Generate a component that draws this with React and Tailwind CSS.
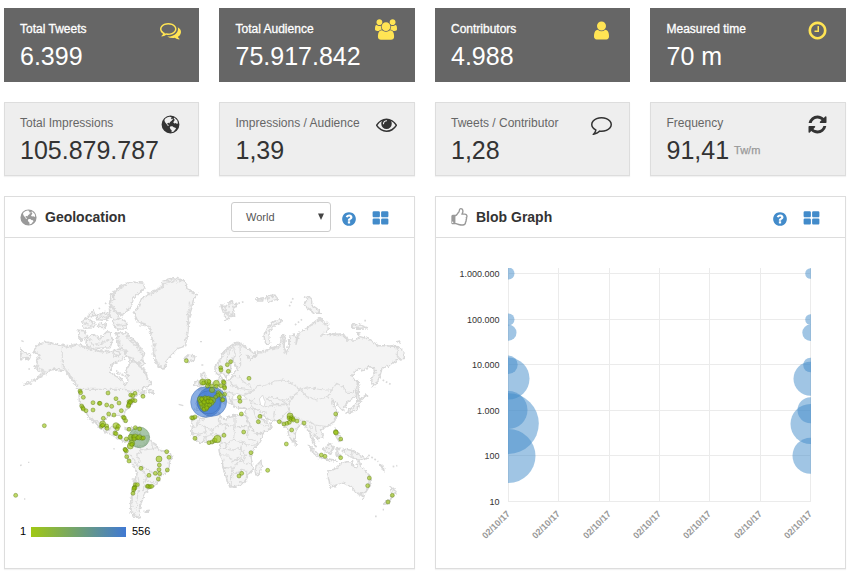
import React from 'react';

const ICONS = {
  comments: ['0 0 1792 1792', 'M704 384q-153 0-286 52t-211.5 141-78.5 191q0 82 53 158t149 132l97 56-35 84q34-20 62-39l44-31 53 10q78 14 153 14 153 0 286-52t211.5-141 78.5-191-78.5-191-211.5-141-286-52zm0-128q191 0 353.5 68.5t256.5 186.5 94 257-94 257-256.5 186.5-353.5 68.5q-86 0-176-16-124 88-278 128-36 9-86 16h-3q-11 0-20.5-8t-11.5-21q-1-3-1-6.5t.5-6.5 2-6l2.5-5 3.5-5.5 4-5 4.5-5 4-4.5q5-6 23-25t26-29.5 22.5-29 25-38.5 20.5-44q-124-72-195-177t-71-224q0-139 94-257t256.5-186.5 353.5-68.5zm822 1169q10 24 20.5 44t25 38.5 22.5 29 26 29.5 23 25q1 1 4 4.5t4.5 5 4 5 3.5 5.5l2.5 5 2 6 .5 6.5-1 6.5q-3 14-13 22t-22 7q-50-7-86-16-154-40-278-128-90 16-176 16-271 0-472-132 58 4 88 4 161 0 309-45t264-129q125-92 192-212t67-254q0-77-23-152 129 71 204 178t75 230q0 120-71 224.5t-195 176.5z'],
  users: ['-64 0 1920 1792', 'M529 896q-162 5-265 128h-134q-82 0-138-40.5t-56-118.5q0-353 124-353 6 0 43.5 21t97.5 42.5 119 21.5q67 0 133-23-5 37-5 66 0 139 81 256zm1071 637q0 120-73 189.5t-194 69.5h-874q-121 0-194-69.5t-73-189.5q0-53 3.5-103.5t14-109 26.5-108.5 43-97.5 62-81 85.5-53.5 111.5-20q10 0 43 21.5t73 48 107 48 135 21.5 135-21.5 107-48 73-48 43-21.5q61 0 111.5 20t85.5 53.5 62 81 43 97.5 26.5 108.5 14 109 3.5 103.5zm-1024-1277q0 106-75 181t-181 75-181-75-75-181 75-181 181-75 181 75 75 181zm704 384q0 159-112.5 271.5t-271.5 112.5-271.5-112.5-112.5-271.5 112.5-271.5 271.5-112.5 271.5 112.5 112.5 271.5zm576 225q0 78-56 118.5t-138 40.5h-134q-103-123-265-128 81-117 81-256 0-29-5-66 66 23 133 23 59 0 119-21.5t97.5-42.5 43.5-21q124 0 124 353zm-128-609q0 106-75 181t-181 75-181-75-75-181 75-181 181-75 181 75 75 181z'],
  user: ['0 0 1792 1792', 'M1536 1399q0 109-62.5 187t-150.5 78h-854q-88 0-150.5-78t-62.5-187q0-85 8.5-160.5t31.5-152 58.5-131 94-89 134.5-34.5q131 128 313 128t313-128q76 0 134.5 34.5t94 89 58.5 131 31.5 152 8.5 160.5zm-256-887q0 159-112.5 271.5t-271.5 112.5-271.5-112.5-112.5-271.5 112.5-271.5 271.5-112.5 271.5 112.5 112.5 271.5z'],
  clock: ['0 0 1792 1792', 'M1024 544v448q0 14-9 23t-23 9h-320q-14 0-23-9t-9-23v-64q0-14 9-23t23-9h224v-352q0-14 9-23t23-9h64q14 0 23 9t9 23zm416 352q0-148-73-273t-198-198-273-73-273 73-198 198-73 273 73 273 198 198 273 73 273-73 198-198 73-273zm224 0q0 209-103 385.5t-279.5 279.5-385.5 103-385.5-103-279.5-279.5-103-385.5 103-385.5 279.5-279.5 385.5-103 385.5 103 279.5 279.5 103 385.5z'],
  eye: ['0 0 1792 1792', 'M1664 960q-152-236-381-353 61 104 61 225 0 185-131.5 316.5t-316.5 131.5-316.5-131.5-131.5-316.5q0-121 61-225-229 117-381 353 133 205 333.5 326.5t434.5 121.5 434.5-121.5 333.5-326.5zm-720-384q0-20-14-34t-34-14q-125 0-214.5 89.5t-89.5 214.5q0 20 14 34t34 14 34-14 14-34q0-86 61-147t147-61q20 0 34-14t14-34zm848 384q0 34-20 69-140 230-376.5 368.5t-499.5 138.5-499.5-139-376.5-368q-20-35-20-69t20-69q140-229 376.5-368t499.5-139 499.5 139 376.5 368q20 35 20 69z'],
  comment: ['0 0 1792 1792', 'M896 384q-204 0-381.5 69.5t-282 187.5-104.5 255q0 112 71.5 213.5t201.5 175.5l87 50-27 96q-24 91-70 172 152-63 275-171l43-38 57 6q69 8 130 8 204 0 381.5-69.5t282-187.5 104.5-255-104.5-255-282-187.5-381.5-69.5zm896 512q0 174-120 321.5t-326 233-450 85.5q-70 0-145-8-198 175-460 242-49 14-114 22h-5q-15 0-27-10.5t-16-27.5v-1q-3-4-.5-12t2-10 4.5-9.5l6-9 7-8.5 8-9q7-8 31-34.5t34.5-38 31-39.5 32.5-51 27-59 26-76q-157-89-247.5-220t-90.5-281q0-174 120-321.5t326-233 450-85.5 450 85.5 326 233 120 321.5z'],
  refresh: ['0 0 1792 1792', 'M1639 1056q0 5-1 7-64 268-268 434.5t-478 166.5q-146 0-282.5-55t-243.5-157l-129 129q-19 19-45 19t-45-19-19-45v-448q0-26 19-45t45-19h448q26 0 45 19t19 45-19 45l-137 137q71 66 161 102t187 36q134 0 250-65t186-179q11-17 53-117 8-23 30-23h192q13 0 22.5 9.5t9.5 22.5zm25-800v448q0 26-19 45t-45 19h-448q-26 0-45-19t-19-45 19-45l138-138q-148-137-349-137-134 0-250 65t-186 179q-11 17-53 117-8 23-30 23h-199q-13 0-22.5-9.5t-9.5-22.5v-7q65-268 270-434.5t480-166.5q146 0 284 55.5t245 156.5l130-129q19-19 45-19t45 19 19 45z'],
  question: ['0 0 1792 1792', 'M1024 1376v-192q0-14-9-23t-23-9h-192q-14 0-23 9t-9 23v192q0 14 9 23t23 9h192q14 0 23-9t9-23zm256-672q0-88-55.5-163t-138.5-116-170-41q-243 0-371 213-15 24 8 42l132 100q7 6 19 6 16 0 25-12 53-68 86-92 34-24 86-24 48 0 85.5 26t37.5 59q0 38-20 61t-68 45q-63 28-115.5 86.5t-52.5 125.5v36q0 14 9 23t23 9h192q14 0 23-9t9-23q0-19 21.5-49.5t54.5-49.5q32-18 49-28.5t46-35 44.5-48 28-60.5 12.5-81zm384 192q0 209-103 385.5t-279.5 279.5-385.5 103-385.5-103-279.5-279.5-103-385.5 103-385.5 279.5-279.5 385.5-103 385.5 103 279.5 279.5 103 385.5z'],
  grid: ['0 0 1792 1792', 'M832 1024v384q0 52-38 90t-90 38h-512q-52 0-90-38t-38-90v-384q0-52 38-90t90-38h512q52 0 90 38t38 90zm0-768v384q0 52-38 90t-90 38h-512q-52 0-90-38t-38-90v-384q0-52 38-90t90-38h512q52 0 90 38t38 90zm896 768v384q0 52-38 90t-90 38h-512q-52 0-90-38t-38-90v-384q0-52 38-90t90-38h512q52 0 90 38t38 90zm0-768v384q0 52-38 90t-90 38h-512q-52 0-90-38t-38-90v-384q0-52 38-90t90-38h512q52 0 90 38t38 90z'],
  thumb: ['0 0 1792 1792', 'M320 1344q0-26-19-45t-45-19q-27 0-45.5 19t-18.5 45q0 27 18.5 45.5t45.5 18.5q26 0 45-18.5t19-45.5zm1216-576q0-51-39-89.5t-89-38.5h-352q0-58 48-159.5t48-160.5q0-98-32-145t-128-47q-26 26-38 85t-30.5 125.5-59.5 109.5q-22 23-77 91-4 5-23 30t-31.5 41-34.5 42.5-40 44-38.5 35.5-40 27-35.5 9h-32v640h32q13 0 31.5 3t33 6.5 38 11 35 11.5 35.5 12.5 29 10.5q211 73 342 73h121q192 0 192-167 0-26-5-56 30-16 47.5-52.5t17.5-73.5-18-69q53-50 53-119 0-25-10-55.5t-25-47.5q32-1 53.5-47t21.5-81zm128-1q0 89-49 163 9 33 9 69 0 77-38 144 3 21 3 43 0 101-60 178 1 139-85 219.5t-227 80.5h-129q-96 0-189.5-22.5t-216.5-65.5q-116-40-138-40h-288q-53 0-90.5-37.5t-37.5-90.5v-640q0-53 37.5-90.5t90.5-37.5h274q36-24 137-155 58-75 107-128 24-25 35.5-85.5t30.5-126.5 62-108q39-37 90-37 84 0 151 32.5t102 101.5 35 186q0 93-48 192h176q104 0 180 76t76 179z'],
  globe: ['-1.5 -1.5 20 20', 'M8.5 0A8.5 8.5 0 1 1 8.5 17A8.5 8.5 0 1 1 8.5 0ZM5.6 1.7L3.6 2.9 2.7 4.3 3 5.6 3.7 6.8 4.9 8.2 5.8 9.7 6.8 10 6.5 8.8 5.4 8.3 5.5 7.2 6.7 6.9 7.5 7.5 7.9 6.3 9 5.3 10 4.8 9.5 3.9 10.9 4.1 10.2 2.7 9.3 3.2 8.8 2.3 9.9 1.6 7.6 1.2ZM12.1 1.8L11.5 3 12.6 4 11.8 5.5 11.1 6.4 12.1 7.5 13.7 7.1 14.6 8 15.6 7.2 15 4.8ZM8.6 10.2L7.8 11.3 8.5 13.1 9.6 14 9.5 15.8 11.6 15.2 12.8 13.6 13.8 12.5 13.2 11.5 11.6 11.2 10.4 10.2Z'],
};

function Icon({ name, className }) {
  const [viewBox, d] = ICONS[name];
  return (
    <svg viewBox={viewBox} className={`shrink-0 ${className}`} fill="currentColor" fillRule="evenodd">
      <path d={d} />
    </svg>
  );
}

const STATS = [
  ['Total Tweets', '6.399', 'comments'],
  ['Total Audience', '75.917.842', 'users'],
  ['Contributors', '4.988', 'user'],
  ['Measured time', '70 m', 'clock'],
  ['Total Impressions', '105.879.787', 'globe'],
  ['Impressions / Audience', '1,39', 'eye'],
  ['Tweets / Contributor', '1,28', 'comment'],
  ['Frequency', '91,41', 'refresh', 'Tw/m'],
];

function StatCard({ stat, dark, wide }) {
  const [label, value, icon, unit] = stat;
  const size = icon === 'users' ? 'h-[21px] w-[22px] mt-0' : 'h-[21px] w-[21px] mt-[0.5px]';
  return (
    <div className={`flex h-[74px] justify-between border pt-[10px] ${wide ? 'pl-[15.5px] pr-[17.5px]' : 'pl-[15px] pr-[17px]'} ${dark ? 'border-[#666] bg-[#666] text-white' : 'border-[#ddd] bg-[#eee] text-[#333] shadow-[0_1px_1px_rgba(0,0,0,0.05)]'}`}>
      <div className="whitespace-nowrap">
        <div className={`text-[12px] leading-5 ${dark ? '[-webkit-text-stroke:0.3px_white]' : 'text-[#666]'}`}>{label}</div>
        <div className="-mt-px flex items-center text-[25px] leading-[36px]">
          {value}
          {unit && <span className="ml-[5px] text-[11px] text-[#999] [-webkit-text-stroke:0.25px_#999]">{unit}</span>}
        </div>
      </div>
      <Icon name={icon} className={`${size} ${dark ? 'text-[#ffe454]' : 'text-[#333]'}`} />
    </div>
  );
}

function PanelTools() {
  return (
    <div className="mt-[3px] flex items-center text-[#428bca]">
      <Icon name="question" className="h-4 w-4" />
      <Icon name="grid" className="ml-[15px] h-[17px] w-[17px]" />
    </div>
  );
}

function Panel({ icon, title, children, extra }) {
  return (
    <section className="h-[373px] border border-[#ddd] bg-white shadow-[0_1px_1px_rgba(0,0,0,0.05)]">
      <header className="flex h-[41px] items-center border-b border-[#ddd] pl-[14px] pr-[25px]">
        <Icon name={icon} className="h-[19px] w-[19px] text-[#999]" />
        <h2 className="ml-[7px] flex-1 text-[14px] font-bold text-[#333]">{title}</h2>
        {extra}
        <PanelTools />
      </header>
      {children}
    </section>
  );
}

/* Land outlines, one list for each sheet of the map. */
const WEST_LAND = [
  'M75 248L85 238 105 230 130 236 157 241 178 247 205 238 225 245 240 250 262 258 285 262 300 258 312 262 325 252 345 262 352 272 333 285 313 293 302 305 301 322 315 332 335 343 345 362 353 350 355 330 345 322 358 300 356 290 372 285 385 300 397 310 408 325 412 340 424 355 410 366 395 372 403 378 395 390 385 388 372 400 360 425 345 438 342 452 350 468 343 472 336 455 325 448 312 452 298 455 285 462 278 475 283 490 297 496 303 486 316 483 315 500 322 508 334 514 337 526 356 524 352 530 340 532 325 520 310 512 290 502 270 490 258 475 244 458 250 475 240 462 228 442 214 428 208 410 207 378 198 362 188 345 178 330 165 318 150 315 135 312 120 316 108 328 92 335 75 345 98 322 85 318 75 305 82 295 78 285 92 278 88 268 72 262Z',
  'M395 100L425 85 460 65 455 50 490 38 515 45 530 55 530 70 545 80 562 88 550 105 545 130 535 160 535 190 530 225 525 243 505 250 480 275 468 290 462 312 450 310 437 290 430 265 430 235 420 195 410 178 385 172 372 145 385 125Z',
  'M305 90L330 65 365 50 400 55 405 70 385 85 370 100 365 120 350 140 335 150 310 135 298 115Z',
  'M318 205L345 203 365 218 385 240 405 268 395 285 403 295 390 305 378 295 370 280 350 275 345 255 325 245Z',
  'M230 218L250 207 270 222 290 200 300 202 308 225 300 248 270 250 240 250 228 235Z',
  'M205 195L225 198 232 215 215 228 207 215Z',
  'M215 172L230 158 240 168 255 175 250 188 222 190Z',
  'M232 152L250 137 255 150 240 158Z', 'M262 150L285 142 300 155 285 166 262 164Z', 'M268 175L290 178 285 188 262 186Z',
  'M312 158L335 160 350 172 348 192 320 192 310 178Z', 'M298 125L315 135 330 160 320 165 300 155Z', 'M302 92L310 90 312 102 302 108Z',
  'M313 255L330 262 325 275 312 272Z', 'M524 278L535 270 555 273 553 285 535 293Z', 'M32 252L45 262 62 270 58 282 40 278 33 285Z',
  'M393 382L405 380 400 390Z', 'M412 372L430 378 430 385 415 382Z', 'M345 490L360 488 372 494 360 495Z',
  'M358 540L360 520 375 500 392 510 415 515 425 530 440 540 445 555 470 560 488 572 478 592 478 610 465 625 450 635 445 650 432 662 412 675 402 690 395 710 388 735 390 755 375 758 362 740 362 710 368 680 375 650 380 620 370 600 355 585 345 565 345 553Z',
  'M405 738L418 736 412 742Z',
];
const WEST_BORDERS = 'M157 241V312M157 300L178 328M208 373H345L357 382 375 375 390 378M236 461L260 470 278 473M284 495L292 502M360 540L385 545 400 555 425 552 440 548M345 568L365 572 380 600 400 608 425 620 440 632M378 602L390 590 380 570 395 560 385 545 410 535 412 518M383 625L388 660 382 700 378 740M400 640L420 650 432 655M398 615L410 640 402 655 400 680M425 530L428 552';
const WEST_RUGGED = 'M162 245L200 238 232 250 262 257 300 258M170 322L185 338 202 366M88 268L78 285 82 305 108 322 62 352 40 360M372 640L368 680 363 715 366 740 384 756M386 290L410 325M436 235L432 265 440 292 458 312M540 110L536 150 532 200 526 240M410 85L440 75 470 50 525 48M300 92L320 75 350 55M302 118L315 138 340 152M232 215L250 240 275 235 300 222M350 210L385 250 402 278M350 275L375 290 395 308M322 210L330 240 350 262M222 175L245 182M268 155L298 158M320 180H350M318 320L350 335M388 178L410 180 424 205';

const EAST_LAND = [
  'M45 305L60 285 68 268 80 250 98 238 112 232 126 240 140 248 158 262 168 270 152 275 138 268 150 284 168 272 185 258 200 255 215 248 228 245 240 240 245 215 250 206 256 220 252 240 258 268 266 240 270 215 280 207 290 218 288 238 294 215 298 202 320 190 335 178 358 160 382 175 385 195 365 210 400 208 430 207 440 225 465 225 480 215 505 222 535 242 560 242 595 245 613 262 613 280 600 282 585 290 572 300 546 310 540 332 530 355 518 365 515 345 528 315 508 305 490 318 478 310 455 330 460 342 475 350 472 375 465 395 450 405 440 412 436 425 430 438 422 430 412 418 396 402 402 425 412 440 410 455 395 478 370 490 360 496 370 508 368 518 356 524 344 508 338 520 348 545 340 538 332 518 330 500 320 490 312 475 300 480 288 495 283 520 278 530 268 515 262 490 250 480 240 468 215 466 200 462 190 450 180 452 195 470 215 476 210 492 185 505 168 510 160 500 145 472 136 452 140 430 120 430 100 425 96 408 88 418 80 410 70 395 62 390 76 410 72 418 58 402 45 395 30 410 22 432 5 440 -12 435 -10 405 15 402 18 385 8 378 25 370 40 355 52 350 60 333 66 345 90 345 98 335 100 322 115 315 108 303 98 285 106 268 92 290 92 318 78 337 68 322 55 330 45 320Z',
  'M-2 372L8 345 2 330 12 322 20 345 28 365 10 372Z', 'M-15 350L0 348 -2 362 -16 364Z',
  'M195 230L192 212 205 185 222 170 245 163 242 172 222 180 208 200 206 220 212 233 200 238Z',
  'M62 120L85 122 92 108 112 120 100 130 104 155 95 150 80 165 70 142Z',
  'M170 102L190 98 188 108 172 108Z', 'M200 92L225 90 232 103 205 112Z', 'M312 120L325 95 335 105 335 120 350 130 362 145 340 145 328 132Z',
  'M455 180L475 178 502 188 480 190 458 190Z', 'M470 202L480 206 472 210Z', 'M590 230L600 228 602 234Z',
  'M473 345L478 365 474 385 480 405 470 408 470 375Z', 'M470 412L490 395 500 390 488 405 475 418 470 435 450 442 438 445 445 435 462 425Z',
  'M408 492L416 505 410 512 422 515 428 528 414 525 405 508Z', 'M328 540L345 558 362 575 355 578 338 562Z', 'M362 578L400 584 412 588 380 586Z',
  'M370 552L392 536 402 548 392 568 376 562Z', 'M408 552L420 550 412 560 420 575 408 570Z', 'M430 552L455 556 480 572 505 580 482 586 450 575 430 562Z',
  'M383 628L385 618 410 610 425 595 440 590 458 590 455 600 470 608 475 585 485 605 500 620 512 640 508 665 495 685 480 690 465 680 455 665 430 655 410 660 390 667 388 650Z',
  'M482 683L495 683 490 700Z', 'M570 665L588 680 575 696 574 680Z', 'M552 718L575 698 565 716Z', 'M540 598L550 606 552 618Z',
  'M284 525L290 532 286 540Z', 'M409 448L412 455 408 460Z',
];
const EAST_BORDERS = 'M158 380L170 362 200 360 225 348 250 345 270 352 300 372 290 385 262 405 240 405 215 395 195 400M300 372L330 368 370 375 395 375 385 395 350 405 320 395 300 372M395 375L410 355 430 365 440 385 455 385 470 370M290 385L262 420 270 445 300 465 330 470 345 480 380 485M592 245V272L600 282M120 240L122 300 105 322M106 268L100 245 85 262 78 300M100 335H118L130 350 150 362 155 380 130 392M90 345L98 365 120 370 150 375M58 355L62 375 80 380 100 385 108 392M40 365L55 375 58 395M78 350L75 375M80 380L90 405M140 432L160 430 185 440 200 445M150 412L160 430 165 450 185 480 210 485M195 425L230 418 262 420M225 430L220 460M240 465L262 440 270 445M200 400L225 420 262 415M308 470L312 480M330 470L335 500M345 480L350 505M350 530L345 540M370 552L390 550M455 556L456 576M165 400L150 405 160 415 182 418M110 360L90 362M62 375L45 385M100 388L98 402 88 405M245 405L260 418';
const EAST_RUGGED = 'M52 300L66 276 84 252 112 236 134 244M160 262L185 262 215 252 240 246M246 215L256 264M292 212L300 206M328 182L360 162 378 180M400 210H430L444 225M85 112L100 120M72 124L82 150 92 146';

const CENTRE_LAND = [
  'M50 243L62 232 85 236 100 224 133 220 137 232 155 238 165 228 195 224 212 226 216 238 222 255 234 272 240 282 262 280 264 288 250 312 235 330 228 345 230 362 235 385 222 402 215 415 205 430 190 438 165 442 158 425 150 400 143 380 143 360 135 345 132 330 135 312 128 305 120 308 102 306 90 305 75 308 62 298 50 280 52 262Z',
  'M243 378L258 363 260 380 252 402 243 405 240 392Z',
];
const CENTRE_BORDERS = 'M52 262L65 260 66 244 85 240M66 248L88 262 95 278 72 282 52 280M133 222L130 240 140 250 155 255 180 260V226M180 260H222M88 262L112 270 140 250M112 270L108 285 90 290 85 305M108 285L128 284 140 288 155 255M128 284L126 304M140 288L138 308 155 312 175 300 180 260M155 312L150 325H135M175 300L200 305 215 315 240 312 250 310M200 305L198 325 210 345 228 348M222 255L215 290 230 300 245 302M150 325L168 330 198 325M140 345H160L172 365 190 355 200 365 195 335M143 382L175 385 185 370 200 365 215 372 230 368M175 385L170 405 168 440M170 405L185 400 200 388 215 392 215 415M60 298L72 282M95 305L92 292M192 432L196 424 203 428M205 365L212 345';

const WEST_DOTS = [[210,378],[212,383],[294,384],[362,390],[375,385],[318,401],[399,394],[220,397],[249,413],[268,415],[270,415],[290,420],[305,424],[327,414],[215,423],[218,428],[220,432],[228,437],[249,435],[334,437],[296,447],[312,450],[340,457],[343,459],[347,467],[357,410],[362,408],[368,406],[375,407],[358,415],[361,412],[355,424],[356,420],[368,392],[280,460],[274,484],[278,477,9],[290,483],[278,481],[291,490],[318,482,9],[322,491],[325,484],[315,504],[318,506],[330,515],[331,517],[357,493],[376,488],[389,492],[103,482],[17,691],[349,522],[363,517,9],[370,516],[376,516,9],[383,518],[388,517,8],[396,520],[400,519],[372,522],[365,535,9],[361,543,9],[366,538],[345,553],[349,558],[346,555],[350,575],[357,588],[470,560],[477,577],[447,582,9],[448,600],[447,614],[449,626],[436,625],[472,615],[393,610],[417,631],[445,642],[376,659],[382,659],[373,667],[375,669],[371,675],[369,685],[372,670],[412,664],[415,664],[420,665],[425,664],[529,287]];
const CENTRE_DOTS = [[137,83],[138,90],[157,74],[167,65],[160,94],[222,115],[193,172],[195,184],[199,222],[255,229],[250,245],[206,276],[60,295],[102,308],[111,306],[119,301,7],[127,297,11],[147,286],[228,338],[192,408],[200,400],[278,391],[334,312],[350,270],[313,245],[327,252],[336,250],[343,247],[345,228,9],[342,234],[349,233],[348,238],[354,236],[355,240],[366,243],[50,233],[54,234],[60,231],[145,125],[147,128],[148,140],[149,144],[124,130,9],[124,139],[110,138],[83,126,9],[86,129],[98,126,9],[100,132],[97,138],[102,125],[138,137],[130,158],[134,162],[138,167],[142,180],[128,166],[149,163],[111,150,8],[144,179],[122,171]];
const SPAIN_DOTS = [[76,178,9],[80,185,10],[84,178,8],[90,173],[96,178,9],[101,174],[104,182,9],[108,177],[113,181,9],[109,188,8],[96,189,9],[89,194,10],[84,200,9],[91,205,9],[97,198,8],[104,195],[78,192],[80,177],[99,184],[87,208],[95,204],[107,184],[87,186]];
const EAST_DOTS = [[312,474],[407,447],[407,501,7],[408,503,7],[422,522],[364,570],[375,574],[422,578],[508,639],[503,662],[577,691],[564,711]];

function Dots({ items }) {
  return items.map(([x, y, r = 6], i) => (
    <circle key={i} cx={x} cy={y} r={r} fill="#98c20c" fillOpacity=".62" stroke="#5a7810" strokeOpacity=".48" strokeWidth="2.6" />
  ));
}

function Land({ shapes, borders, rugged }) {
  return (
    <g filter="url(#coast)" stroke="#d9d9d9" strokeWidth="4.4" strokeLinejoin="round">
      {shapes.map((d, i) => <path key={i} d={d} fill="#f4f4f4" />)}
      <path d={borders} fill="none" strokeWidth="3.6" stroke="#dcdcdc" />
      {rugged && <path d={rugged} fill="none" stroke="#dcdcdc" strokeWidth="7" strokeDasharray="9 2 4 3" />}
    </g>
  );
}

const WEST = 'translate(5 27) scale(.33333)';
const EAST = 'translate(195 27) scale(.33333)';
const CENTRE = 'translate(170 102) scale(.33333)';

function WorldMap() {
  return (
    <svg viewBox="0 0 409 330" className="block h-[330px] w-[409px]" fontFamily="Liberation Sans, Arial, sans-serif">
      <defs>
        <filter id="coast" x="-5%" y="-5%" width="110%" height="110%" colorInterpolationFilters="sRGB">
          <feTurbulence type="fractalNoise" baseFrequency=".11" numOctaves="3" seed="4" />
          <feDisplacementMap in="SourceGraphic" scale="13" xChannelSelector="R" yChannelSelector="G" />
        </filter>
        <linearGradient id="scale"><stop stopColor="#a0c814" /><stop offset="1" stopColor="#4079d3" /></linearGradient>
        <clipPath id="mapArea"><rect x="15" y="30" width="385" height="260" /></clipPath>
      </defs>
      <g clipPath="url(#mapArea)">
        <g transform={EAST}><Land shapes={EAST_LAND} borders={EAST_BORDERS} rugged={EAST_RUGGED} />
          <g fill="#fff" stroke="#ddd" strokeWidth="3"><path d="M98 394L110 385 130 392 142 402 120 403 98 405Z" /><path d="M178 402L188 390 192 402 196 410 192 426 182 420Z" /></g>
          <g fill="none" stroke="#d9d9d9" strokeWidth="5" strokeDasharray="5 6"><path d="M172 105L230 95M63 125H110M75 135L103 150M115 115L132 110M268 124L280 98M285 180L310 160M505 570L535 590M548 345L572 358M578 605L592 602M70 262L95 240 120 236M312 95L318 98M493 167H500M88 195H92M525 754H530M548 734H552" /></g>
        </g>
        <g transform={CENTRE}><Land shapes={CENTRE_LAND} borders={CENTRE_BORDERS} /></g>
        <g transform={WEST}><Land shapes={WEST_LAND} borders={WEST_BORDERS} rugged={WEST_RUGGED} />
          <path d="M34 227L41 230M55 312H60M28 602L35 600M54 592H58M310 551L314 552M506 418L520 422M42 702H46M570 230H576M574 300H580M285 113L289 117M266 128L270 132" stroke="#d9d9d9" strokeWidth="4" />
        </g>
      </g>
      <g transform={CENTRE} fill="#3c78d2" stroke="#3b68ad" strokeOpacity=".65" strokeWidth="2">
        <circle cx="93" cy="186" r="46" fillOpacity=".6" /><circle cx="111" cy="185" r="44" fillOpacity=".6" /><circle cx="101" cy="187" r="35" fillOpacity=".3" />
      </g>
      <g transform={WEST}>
        <circle cx="388" cy="517" r="31" fill="#6ea06f" fillOpacity=".6" stroke="#58865a" strokeOpacity=".6" strokeWidth="2" />
        <Dots items={WEST_DOTS} />
      </g>
      <g transform={CENTRE}><Dots items={CENTRE_DOTS} /><Dots items={SPAIN_DOTS} /></g>
      <g transform={EAST}><Dots items={EAST_DOTS} /></g>
      <rect x="26" y="289" width="95" height="10" fill="url(#scale)" />
      <text x="15" y="297" fontSize="11">1</text>
      <text x="127" y="297" fontSize="11">556</text>
    </svg>
  );
}

const BLOBS = [
  [508.5, 273.5, 6], [508.5, 319.5, 6], [508.5, 332.7, 8], [508.5, 364.7, 9.2], [508.5, 378.6, 21], [508.5, 410, 19], [508.5, 423.6, 30.3], [508.5, 456, 27],
  [810.5, 273.5, 5.3], [810.5, 319.5, 5.3], [810.5, 332.8, 8.2], [810.5, 365, 7.3], [810.5, 378.7, 17], [810.5, 410.2, 13], [810.5, 424, 20], [810.5, 455.8, 18],
];
const X_TICKS = [508.5, 558.5, 609.5, 659.5, 709.5, 760.5, 810.5];
const Y_TICKS = [[273.5, '1.000.000'], [319.5, '100.000'], [364.5, '10.000'], [410.5, '1.000'], [455.5, '100'], [501.5, '10']];

function BlobGraph() {
  return (
    <svg viewBox="436 238 409 330" className="block h-[330px] w-[409px]" fontFamily="Liberation Sans, Arial, sans-serif" fontSize="9">
      <clipPath id="plot"><rect x="508" y="268" width="303" height="234" /></clipPath>
      <g stroke="#ebebeb">
        {X_TICKS.map((x) => <path key={x} d={`M${x} 268V502`} />)}
        {Y_TICKS.map(([y]) => <path key={y} d={`M508 ${y}H811`} />)}
      </g>
      <g clipPath="url(#plot)" fill="#428bca" fillOpacity=".5">
        {BLOBS.map(([x, y, r], i) => <circle key={i} cx={x} cy={y} r={r} />)}
      </g>
      <g textAnchor="end" fill="#333">
        {Y_TICKS.map(([y, label]) => <text key={label} x="499.5" y={y + 3.5}>{label}</text>)}
      </g>
      <g textAnchor="end" fill="#999" fontWeight="bold">
        {X_TICKS.map((x) => <text key={x} transform={`translate(${x + 2} 514.5) rotate(-45)`}>02/10/17</text>)}
      </g>
    </svg>
  );
}

function RegionSelect() {
  return (
    <button className="mr-[10px] flex h-[30px] w-[100px] items-center justify-between rounded-[3px] border border-[#ccc] pl-[14px] pr-[6px] text-[11px] text-[#555]">
      World
      <svg viewBox="0 0 6 7" className="mb-px h-[7px] w-[6px]" fill="#444"><path d="M0 .5H6L3 7Z" /></svg>
    </button>
  );
}

export default function App() {
  return (
    <main className="h-[574px] w-[853px] overflow-hidden bg-white pl-1 pr-[7px] pt-2 font-['Liberation_Sans',Arial,sans-serif]">
      <div className="grid grid-cols-[195px_196px_195px_196px] gap-5">
        {STATS.map((stat, i) => <StatCard key={stat[0]} stat={stat} dark={i < 4} wide={i % 2 === 1} />)}
      </div>
      <div className="mt-5 grid grid-cols-2 gap-5">
        <Panel icon="globe" title="Geolocation" extra={<RegionSelect />}><WorldMap /></Panel>
        <Panel icon="thumb" title="Blob Graph"><BlobGraph /></Panel>
      </div>
    </main>
  );
}
